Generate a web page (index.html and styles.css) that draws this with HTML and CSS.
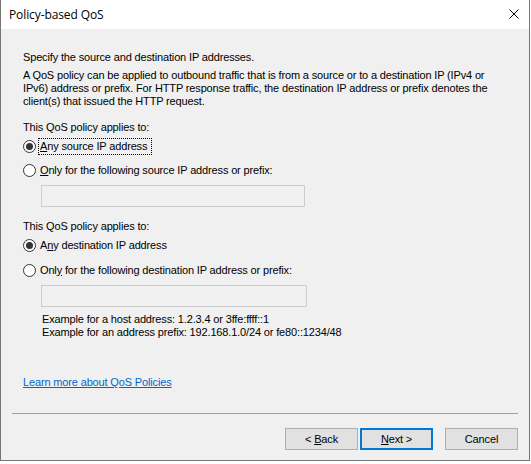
FILE: index.html
```html
<!DOCTYPE html>
<html>
<head>
<meta charset="utf-8">
<title>Policy-based QoS</title>
<link rel="stylesheet" href="styles.css">
</head>
<body>
<div class="window">
  <div class="titlebar">
    <span class="title">Policy-based QoS</span>
    <svg class="close" width="10" height="10" viewBox="0 0 10 10"><path d="M0.5 0.5 L9.5 9.5 M9.5 0.5 L0.5 9.5" stroke="#000" stroke-width="1" fill="none"/></svg>
  </div>
  <div class="content">
    <p class="intro">Specify the source and destination IP addresses.</p>
    <p class="desc">A QoS policy can be applied to outbound traffic that is from a source or to a destination IP (IPv4 or<br>IPv6) address or prefix. For HTTP response traffic, the destination IP address or prefix denotes the<br>client(s) that issued the HTTP request.</p>

    <p class="label first-label">This QoS policy applies to:</p>
    <div class="radio r1"><span class="dot checked"></span><span class="rtext focus"><u>A</u>ny source IP address</span></div>
    <div class="radio r2"><span class="dot"></span><span class="rtext"><u>O</u>nly for the following source IP address or prefix:</span></div>
    <div class="textbox tb1"></div>

    <p class="label second-label">This QoS policy applies to:</p>
    <div class="radio r3"><span class="dot checked"></span><span class="rtext">A<u>n</u>y destination IP address</span></div>
    <div class="radio r4"><span class="dot"></span><span class="rtext">Onl<u>y</u> for the following destination IP address or prefix:</span></div>
    <div class="textbox tb2"></div>
    <p class="examples">Example for a host address: 1.2.3.4 or 3ffe:ffff::1<br>Example for an address prefix: 192.168.1.0/24 or fe80::1234/48</p>

    <a class="link" href="#">Learn more about QoS Policies</a>
  </div>
  <div class="footer">
    <div class="separator"></div>
    <div class="buttons">
      <button class="btn">&lt; <u>B</u>ack</button>
      <button class="btn default"><u>N</u>ext &gt;</button>
      <button class="btn cancel">Cancel</button>
    </div>
  </div>
</div>
</body>
</html>
```

FILE: styles.css
```css
html, body {
  margin: 0;
  padding: 0;
  background: #ffffff;
}

body {
  font-family: "Liberation Sans", Arial, sans-serif;
  font-size: 11px;
  letter-spacing: -0.15px;
  color: #000;
}

.window {
  box-sizing: border-box;
  width: 530px;
  height: 461px;
  border: 1px solid #767676;
  border-top: none;
  display: flex;
  flex-direction: column;
  background: #f0f0f0;
}

.titlebar {
  height: 29px;
  flex: none;
  background: #ffffff;
  display: flex;
  align-items: center;
  justify-content: space-between;
  padding: 0 10px 0 8px;
}

.title {
  font-family: "Open Sans", "Noto Sans", sans-serif;
  font-size: 12px;
  letter-spacing: -0.1px;
  color: #000;
}

.close {
  display: block;
  margin-top: -2px;
}

.content {
  flex: 1;
  padding: 22px 0 0 22px;
  line-height: 13px;
}

p {
  margin: 0;
}

.desc {
  margin-top: 5px;
}

.label.first-label {
  margin-top: 13px;
}

.label.second-label {
  margin-top: 13px;
}

.radio {
  display: flex;
  align-items: center;
  height: 16px;
}

.r1 { margin-top: 4px; }
.r2 { margin-top: 8px; }
.r3 { margin-top: 4px; }
.r4 { margin-top: 9px; }

.dot {
  box-sizing: border-box;
  width: 13px;
  height: 13px;
  border: 1px solid #333;
  border-radius: 50%;
  background: #fff;
  flex: none;
  display: flex;
  align-items: center;
  justify-content: center;
}

.dot.checked::after {
  content: "";
  width: 7px;
  height: 7px;
  border-radius: 50%;
  background: #333;
}

.rtext {
  margin-left: 2px;
  padding: 1px 4px 1px 1px;
  border: 1px solid transparent;
}

.rtext.focus {
  border: 1px dotted #000;
}

u {
  text-decoration: underline;
  text-underline-offset: 1px;
}

.textbox {
  box-sizing: border-box;
  margin-left: 18px;
  margin-top: 7px;
  height: 22px;
  border: 1px solid #cccccc;
  background: #f0f0f0;
}

.tb1 { width: 264px; }
.tb2 { width: 266px; }

.examples {
  margin-top: 6px;
  margin-left: 19px;
}

.link {
  display: inline-block;
  margin-top: 37px;
  color: #0066cc;
  text-decoration: underline;
}

.footer {
  flex: none;
  padding: 0 11px 10px 11px;
}

.separator {
  height: 1px;
  background: #a0a0a0;
}

.buttons {
  margin-top: 14px;
  display: flex;
  justify-content: flex-end;
  gap: 2px;
}

.btn {
  box-sizing: border-box;
  width: 73px;
  height: 22px;
  padding: 0;
  margin: 0;
  background: #e1e1e1;
  border: 1px solid #adadad;
  border-radius: 0;
  font-family: "Liberation Sans", Arial, sans-serif;
  font-size: 11px;
  letter-spacing: -0.15px;
  color: #000;
}

.btn.default {
  border: 2px solid #0078d7;
}

.btn.cancel {
  margin-left: 10px;
}
```
